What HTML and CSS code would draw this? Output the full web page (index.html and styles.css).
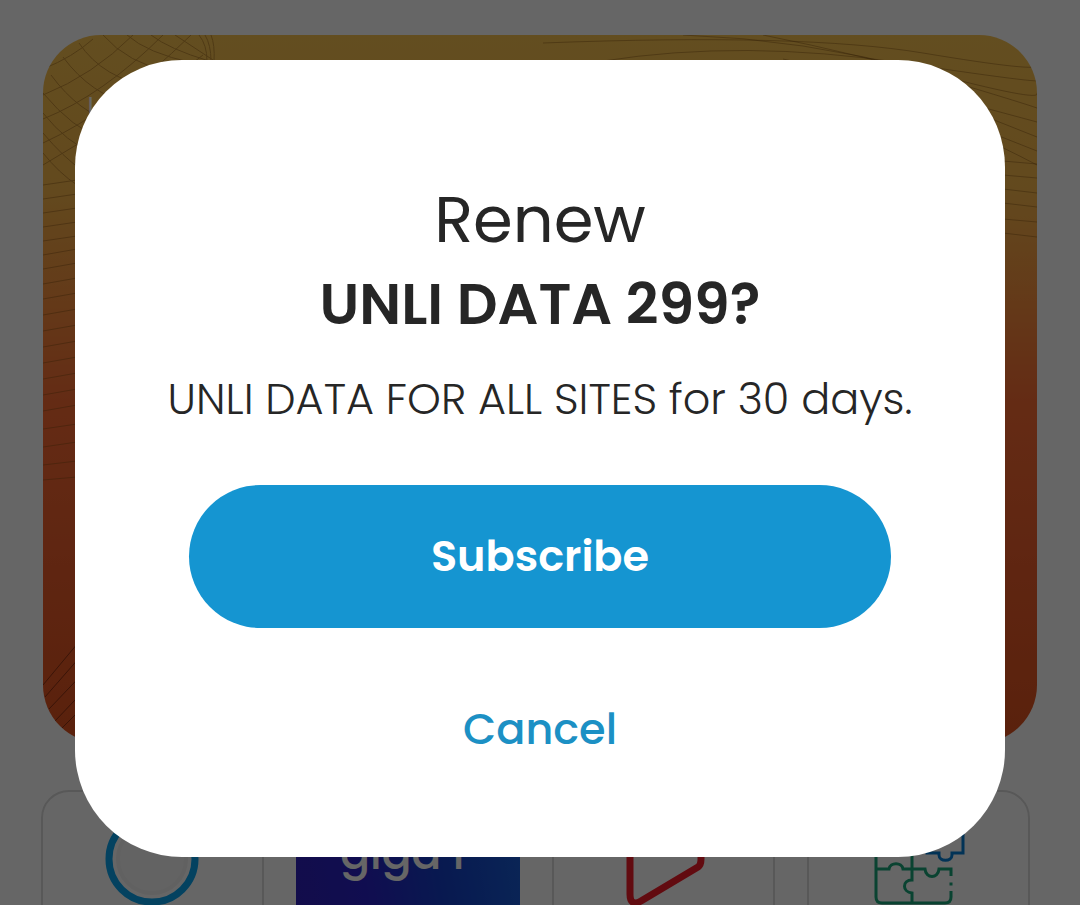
FILE: index.html
```html
<!DOCTYPE html>
<html lang="en">
<head>
<meta charset="utf-8">
<meta name="viewport" content="width=device-width, initial-scale=1">
<title>Renew subscription</title>
<link rel="stylesheet" href="styles.css">
</head>
<body>
<main class="page" aria-hidden="true">
  <section class="hero">
    <svg class="hero-pattern" viewBox="0 0 994 708" preserveAspectRatio="none" fill="none" stroke="#7a4a10" stroke-width="1">
      <g opacity="0.4">
        <path d="M0 118Q16 138 34 150M0 98Q20 122 40 136M0 78Q24 108 50 118M0 58Q30 94 60 104M8 40Q36 78 72 88M20 22Q48 60 90 70M36 8Q60 44 110 52M60 0Q84 28 130 38M84 0Q104 18 150 28M108 0Q126 14 166 26M132 0L170 25"/>
        <path d="M0 60Q50 40 90 0M0 84Q60 60 120 0M0 108Q70 76 148 0M0 130Q80 84 160 20M0 34Q30 22 50 4M156 0Q164 10 164 26M162 0Q168 10 168 26M168 0Q172 10 171 26"/>
        <path d="M0 150L34 145M0 164L34 159M0 178L34 173M0 192L34 187M0 206L34 201M0 220L34 214M0 234L34 228M0 249L34 243M0 264L34 258M0 280L34 274M0 296L34 290M0 312L34 306M0 328L34 322M0 344L34 338M0 360L34 354M0 376L34 370M0 394L34 389M0 412L34 407M0 430L34 426M0 445L34 442"/>
        <path d="M500 8Q760 -2 880 18T994 30M560 26Q700 4 860 28T994 44M640 0Q760 4 880 36T994 58M720 0Q820 20 900 44T994 73M740 24Q860 50 994 87M860 50Q930 76 994 102M910 84Q950 98 994 116M940 104Q960 112 994 130M960 126L994 129M960 140L994 143M960 154L994 158M960 168L994 172M960 184L994 187M960 198L994 202"/>
      </g>
      <g stroke="#4a1608" opacity="0.55">
        <path d="M0 650L40 602M2 662L44 614M6 674L48 630M12 686L52 644M18 694L56 656"/>
      </g>
    </svg>
    <p class="hero-title">UNLI DATA 299</p>
  </section>
  <section class="tiles">
    <div class="tile">
      <svg class="tile-art" width="223" height="160" viewBox="0 0 223 160" fill="none">
        <circle cx="111" cy="69" r="34" fill="#f8f8f8" stroke="#f2f2f2" stroke-width="4"/>
        <circle cx="111" cy="69" r="43" stroke="#0aa5f0" stroke-width="7"/>
      </svg>
    </div>
    <div class="tile tile-promo"><span class="promo-name">giga F</span></div>
    <div class="tile">
      <svg class="tile-art" width="223" height="160" viewBox="0 0 223 160" fill="none" stroke="#f51d28" stroke-width="7" stroke-linejoin="round">
        <path d="M78 26V104Q78 117 89 111L146 77Q149 75 149 69V61Q149 57 146 55L89 19Q78 13 78 26Z"/>
      </svg>
    </div>
    <div class="tile">
      <svg class="tile-art" width="223" height="160" viewBox="0 0 223 160" fill="none" stroke-width="3">
        <g stroke="#19a77c">
          <path d="M69 46V107Q69 113 75 113H138Q144 113 144 107V101"/>
          <path d="M69 79H82C83 72 95 72 96 79H118C119 89 131 89 132 79H144V86"/>
          <path d="M105 46V90C95 90 95 102 105 103V113"/>
          <path d="M144 92.5V95.500"/>
        </g>
        <path stroke="#0780d6" d="M156 28V63H145V65C145 72 132 72 132 65V63H120V28Z"/>
      </svg>
    </div>
  </section>
</main>
<div class="overlay">
  <div class="dialog" role="dialog" aria-modal="true" aria-labelledby="dialog-title" aria-describedby="dialog-text">
    <h1 class="dialog-title" id="dialog-title">Renew <strong class="dialog-plan">UNLI DATA 299?</strong></h1>
    <p class="dialog-text" id="dialog-text">UNLI DATA FOR ALL SITES for 30 days.</p>
    <button class="button-primary" type="button">Subscribe</button>
    <button class="button-link" type="button">Cancel</button>
  </div>
</div>
</body>
</html>
```
FILE: styles.css
```css
* {
  box-sizing: border-box;
}

body {
  margin: 0;
  background: #fff;
  color: #262626;
  font-family: Poppins, Inter, "Liberation Sans", sans-serif;
}

.page {
  display: flex;
  flex-direction: column;
  gap: 47px;
  height: 100vh;
  padding-top: 35px;
  overflow: hidden;
}

.hero {
  position: relative;
  flex: none;
  min-height: 708px;
  margin: 0 43px;
  padding: 54px 44px;
  border-radius: 58px;
  overflow: hidden;
  background: linear-gradient(#f8c250 0%, #f7b74c 22%, #f98f3e 38%, #fb6c34 52%, #ee5e2c 75%, #e0531f 100%);
}

.hero-pattern {
  position: absolute;
  inset: 0;
  width: 100%;
  height: 100%;
}

.hero-title {
  position: relative;
  margin: 0;
  color: #fff;
  font-size: 32px;
  font-weight: 300;
  line-height: 40px;
}

.tiles {
  display: grid;
  flex: none;
  grid-template-columns: repeat(4, minmax(0, 1fr));
  gap: 32px;
  padding: 0 50px 0 41px;
}

.tile {
  display: flex;
  justify-content: center;
  height: 224px;
  border: 2px solid #dcdcdc;
  border-radius: 28px;
}

.tile-art {
  flex: none;
  margin-top: -2px;
}

.tile-promo {
  padding-top: 36px;
  border: 0;
  border-radius: 0;
  background: linear-gradient(80deg, #2f20b8 0%, #2a22c8 35%, #1440c8 65%, #1a60d8 100%);
}

.promo-name {
  color: #fff;
  font-size: 44px;
  font-weight: 500;
  line-height: 56px;
}

.overlay {
  position: fixed;
  inset: 0;
  padding: 60px 75px;
  background: rgba(0, 0, 0, 0.6);
}

.dialog {
  display: flex;
  flex-direction: column;
  align-items: center;
  padding: 118px 48px 96px;
  border-radius: 107px;
  background: #fff;
  text-align: center;
}

.dialog-title {
  margin: 0;
  font-size: 64px;
  font-weight: 400;
  line-height: 84px;
}

.dialog-plan {
  display: block;
  font-size: 57px;
  font-weight: 600;
}

.dialog-text {
  margin: 21px 0 54px;
  font-size: 43px;
  font-weight: 300;
  line-height: 64px;
}

.button-primary,
.button-link {
  border: 0;
  font-family: inherit;
  font-size: 43px;
  cursor: pointer;
}

.button-primary {
  width: 100%;
  max-width: 702px;
  padding: 40px;
  border-radius: 72px;
  background: #1595d1;
  color: #fff;
  font-weight: 600;
  line-height: 63px;
}

.button-link {
  margin-top: 69px;
  padding: 0 24px;
  background: none;
  color: #1c90c4;
  font-weight: 500;
  line-height: 64px;
}
```
